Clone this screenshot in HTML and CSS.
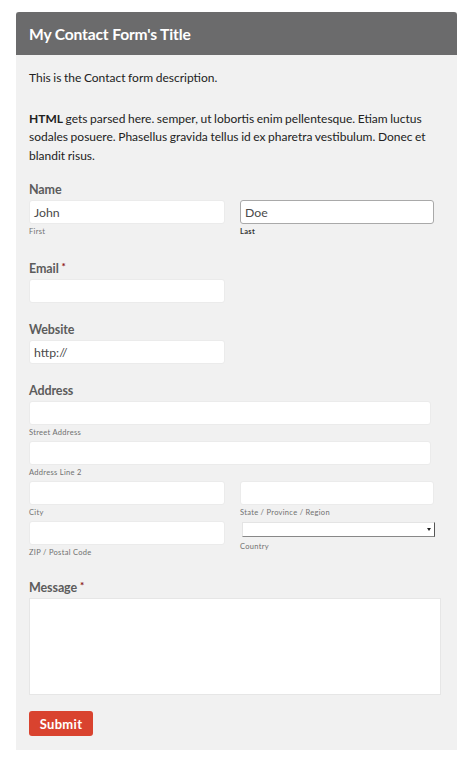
FILE: index.html
```html
<!DOCTYPE html>
<html lang="en">
<head>
<meta charset="utf-8">
<title>My Contact Form's Title</title>
<link rel="stylesheet" href="styles.css">
</head>
<body>
<div class="panel">
  <div class="panel-head"><h1 class="title">My Contact Form's Title</h1></div>
  <form class="panel-body">
    <p class="desc">This is the Contact form description.</p>
    <p class="desc desc-html"><strong>HTML</strong> gets parsed here. semper, ut lobortis enim pellentesque. Etiam luctus sodales posuere. Phasellus gravida tellus id ex pharetra vestibulum. Donec et blandit risus.</p>

    <div class="field field-name">
      <div class="label">Name</div>
      <div class="cols">
        <div class="col">
          <div class="input"><span class="val">John</span></div>
          <div class="sub">First</div>
        </div>
        <div class="col">
          <div class="input input-focus"><span class="val">Doe</span></div>
          <div class="sub sub-strong">Last</div>
        </div>
      </div>
    </div>

    <div class="field">
      <div class="label">Email <span class="req">*</span></div>
      <div class="input input-half"></div>
    </div>

    <div class="field">
      <div class="label">Website</div>
      <div class="input input-half"><span class="val">http://</span></div>
    </div>

    <div class="field">
      <div class="label">Address</div>
      <div class="input input-wide"></div>
      <div class="sub">Street Address</div>
      <div class="input input-wide"></div>
      <div class="sub">Address Line 2</div>
      <div class="cols">
        <div class="col">
          <div class="input"></div>
          <div class="sub">City</div>
        </div>
        <div class="col">
          <div class="input"></div>
          <div class="sub">State / Province / Region</div>
        </div>
        <div class="col">
          <div class="input"></div>
          <div class="sub">ZIP / Postal Code</div>
        </div>
        <div class="col">
          <div class="select"><span class="arrow"></span></div>
          <div class="sub sub-country">Country</div>
        </div>
      </div>
    </div>

    <div class="field field-msg">
      <div class="label">Message <span class="req">*</span></div>
      <div class="textarea"></div>
    </div>

    <div class="button">Submit</div>
  </form>
</div>
</body>
</html>
```

FILE: styles.css
```css
html, body {
  margin: 0;
  padding: 0;
  background: #ffffff;
}
body {
  font-family: Lato, "Open Sans", "Liberation Sans", sans-serif;
  color: #222222;
}
.panel {
  margin: 12px 0 0 16px;
  width: 441px;
  background: #f1f1f1;
}
.panel-head {
  height: 43px;
  background: #6b6b6c;
  border-radius: 3px 3px 0 0;
  display: flex;
  align-items: center;
  padding-left: 13px;
}
.title {
  margin: 0;
  color: #ffffff;
  font-size: 15.6px;
  font-weight: 700;
  letter-spacing: -0.15px;
}
.panel-body {
  display: block;
  padding: 14px 16px 14px 13px;
}
.desc {
  margin: 0;
  font-size: 12px;
  line-height: 18.5px;
  word-spacing: -0.5px;
  color: #222222;
}
.desc-html {
  margin-top: 22px;
}
.desc strong {
  font-weight: 700;
}
.field {
  margin-bottom: 19px;
}
.field-name {
  margin-top: 17px;
  margin-bottom: 21px;
}
.label {
  font-size: 12.5px;
  line-height: 16px;
  font-weight: 700;
  color: #5c5c5c;
  margin-bottom: 2px;
  letter-spacing: -0.1px;
}
.req {
  color: #8b1010;
  font-size: 10px;
  position: relative;
  top: -3px;
}
.cols {
  display: grid;
  grid-template-columns: 196px 194px;
  column-gap: 15px;
}
.input {
  box-sizing: border-box;
  height: 24px;
  background: #ffffff;
  border: 1px solid #ebebeb;
  border-radius: 3px;
  display: flex;
  align-items: center;
  padding-left: 4px;
}
.input-focus {
  border-color: #a9a9a9;
}
.input-half {
  width: 196px;
}
.input-wide {
  width: 402px;
}
.val {
  font-size: 12.3px;
  color: #4a4a4a;
}
.sub {
  font-size: 7.5px;
  line-height: 12px;
  color: #707070;
  margin-top: 2px;
  margin-bottom: 2px;
  letter-spacing: 0.3px;
}
.sub-strong {
  font-weight: 700;
  color: #333333;
}
.select {
  box-sizing: border-box;
  margin-top: 1px;
  margin-left: 2px;
  width: 193px;
  height: 15px;
  background: #ffffff;
  border: 1px solid #e4e4e4;
  border-right: 1px solid #555555;
  border-bottom: 1px solid #888888;
  position: relative;
}
.arrow {
  position: absolute;
  right: 3px;
  top: 5px;
  width: 0;
  height: 0;
  border-left: 2px solid transparent;
  border-right: 2px solid transparent;
  border-top: 3px solid #222222;
}
.sub-country {
  margin-top: 4px;
}
.field-msg {
  margin-bottom: 16px;
}
.textarea {
  box-sizing: border-box;
  width: 412px;
  height: 97px;
  background: #ffffff;
  border: 1px solid #e6e6e6;
}
.button {
  display: inline-flex;
  align-items: center;
  justify-content: center;
  width: 64px;
  height: 25px;
  background: #d9432f;
  border-radius: 3px;
  color: #ffffff;
  font-size: 13px;
  font-weight: 700;
  letter-spacing: 0.3px;
  vertical-align: top;
}
```
